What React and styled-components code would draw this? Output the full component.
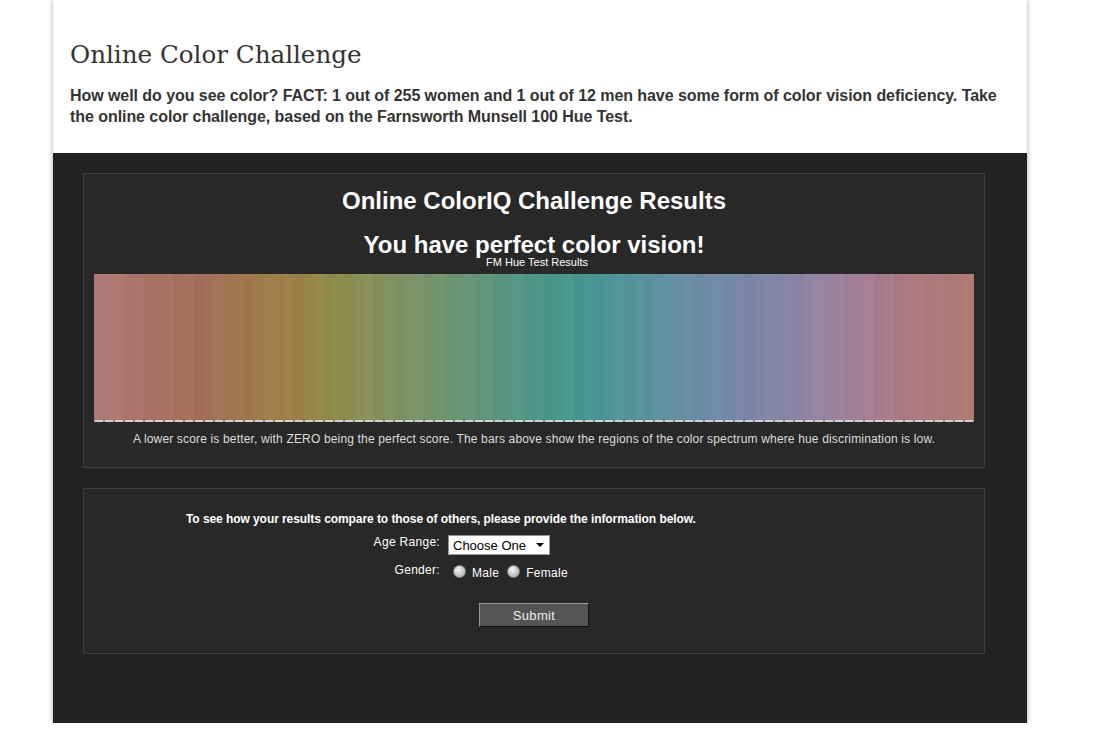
import styled, { createGlobalStyle } from "styled-components"

const GlobalStyle = createGlobalStyle`
  html, body {
    margin: 0;
    padding: 0;
    background: #fff;
  }
  body {
    font-family: "Liberation Sans", Arial, sans-serif;
  }
`

// key colours sampled along the hue strip, left to right
const stops = [
  [0, "#b07a78"], [0.06, "#a87264"], [0.12, "#a26f5a"], [0.17, "#a0774c"],
  [0.21, "#9f8049"], [0.25, "#958646"], [0.27, "#8d8c4a"], [0.3, "#8a8f58"],
  [0.35, "#7d9066"], [0.4, "#6e9570"], [0.45, "#5e957c"], [0.5, "#4d9686"],
  [0.55, "#45978e"], [0.6, "#52939a"], [0.66, "#6490a2"], [0.72, "#7488a6"],
  [0.78, "#8484a4"], [0.84, "#9884a0"], [0.88, "#a67e96"], [0.93, "#ac7882"],
  [1, "#ae7a74"],
]

const hex = (h) => [1, 3, 5].map((i) => parseInt(h.slice(i, i + 2), 16))

const colourAt = (t, jitter) => {
  let i = 0
  while (i < stops.length - 2 && stops[i + 1][0] < t) i++
  const [t0, c0] = stops[i]
  const [t1, c1] = stops[i + 1]
  const k = (t - t0) / (t1 - t0)
  const a = hex(c0)
  const b = hex(c1)
  const rgb = a.map((v, j) => Math.round(v + (b[j] - v) * k + jitter))
  return `rgb(${rgb.join(",")})`
}

const BAND_COUNT = 88
const bands = Array.from({ length: BAND_COUNT }, (_, i) =>
  colourAt(i / (BAND_COUNT - 1), ((i * 7) % 5) - 2)
)

const Page = styled.div`
  width: 974px;
  margin-left: 53px;
  box-shadow: 0 0 5px rgba(0, 0, 0, 0.35);
`

const Header = styled.header`
  background: #fff;
  height: 153px;
  box-sizing: border-box;
  padding: 39px 20px 0 17px;
  color: #333;
`

const Title = styled.h1`
  margin: 0 0 14px;
  font-family: "DejaVu Serif", Georgia, serif;
  font-weight: normal;
  font-size: 24.6px;
  line-height: 32px;
  color: #333;
`

const Intro = styled.p`
  margin: 0;
  font-weight: bold;
  font-size: 16px;
  line-height: 21px;
  letter-spacing: -0.06px;
  color: #333;
`

const Dark = styled.section`
  background: #222;
  height: 570px;
  box-sizing: border-box;
  padding: 20px 42px 0 30px;
  display: flex;
  flex-direction: column;
  gap: 20px;
`

const Panel = styled.div`
  background: #282828;
  border: 1px solid #3d3d3d;
  padding: ${(p) => p.$pad};
`

const ResultTitle = styled.h2`
  margin: ${(p) => p.$top || "0"} 0 0;
  text-align: center;
  color: #fff;
  font-weight: bold;
  font-size: 24px;
  line-height: 28px;
`

const ChartLabel = styled.div`
  text-align: center;
  color: #fff;
  font-size: 11px;
  line-height: 13px;
  margin: -3px 0 5px;
  padding-left: 6px;
`

const Strip = styled.div`
  display: flex;
  height: 148px;
  position: relative;
`

const Band = styled.div`
  flex: 1;
`

const Baseline = styled.div`
  position: absolute;
  left: 0;
  right: 0;
  bottom: 0;
  height: 2px;
  background: repeating-linear-gradient(
    to right,
    transparent 0,
    transparent 1px,
    #d0d0d0 1px,
    #d0d0d0 9px,
    transparent 9px,
    transparent 10px
  );
`

const Caption = styled.p`
  margin: 10px 0 0;
  text-align: center;
  color: #ddd;
  font-size: 12px;
  line-height: 14px;
  letter-spacing: 0.16px;
`

const Form = styled.div`
  display: grid;
  grid-template-columns: 254px auto;
  column-gap: 8px;
  padding-left: 102px;
  color: #fff;
  font-size: 12px;
`

const FormHead = styled.div`
  grid-column: 1 / span 2;
  font-weight: bold;
  line-height: 14px;
  letter-spacing: -0.07px;
  margin-bottom: 4px;
`

const Label = styled.div`
  text-align: right;
  line-height: 14px;
  letter-spacing: 0.3px;
  margin-top: ${(p) => p.$top};
`

const Field = styled.div`
  display: flex;
  align-items: center;
  margin-top: ${(p) => p.$top};
  height: ${(p) => p.$h};
`

const Select = styled.div`
  width: 102px;
  height: 20px;
  box-sizing: border-box;
  background: #fff;
  border: 1px solid #999;
  color: #000;
  font-size: 13px;
  display: flex;
  align-items: center;
  justify-content: space-between;
  padding: 0 5px 0 4px;
`

const Caret = styled.span`
  width: 0;
  height: 0;
  border-left: 4px solid transparent;
  border-right: 4px solid transparent;
  border-top: 4px solid #000;
`

const Radio = styled.span`
  width: 11px;
  height: 11px;
  border-radius: 50%;
  border: 1px solid #888;
  background: radial-gradient(circle at 40% 35%, #f4f4f4, #b8b8b8 70%, #9a9a9a);
  margin: 0 6px 0 ${(p) => p.$left};
`

const RadioText = styled.span`
  color: #fff;
  font-size: 12px;
  letter-spacing: 0.3px;
  padding-top: 3px;
`

const SubmitRow = styled.div`
  display: flex;
  justify-content: center;
  margin-top: 22px;
`

const Submit = styled.button`
  width: 110px;
  height: 24px;
  background: #555;
  color: #eee;
  font-family: "Liberation Sans", Arial, sans-serif;
  font-size: 13px;
  letter-spacing: 0.3px;
  border: 1px solid;
  border-color: #999 #111 #111 #999;
  padding: 0;
`

const App = () => {
  return (
    <>
      <GlobalStyle />
      <Page>
        <Header>
          <Title>Online Color Challenge</Title>
          <Intro>
            How well do you see color? FACT: 1 out of 255 women and 1 out of 12 men have some
            form of color vision deficiency. Take the online color challenge, based on the
            Farnsworth Munsell 100 Hue Test.
          </Intro>
        </Header>
        <Dark>
          <Panel $pad="13px 10px 21px">
            <ResultTitle>Online ColorIQ Challenge Results</ResultTitle>
            <ResultTitle $top="16px">You have perfect color vision!</ResultTitle>
            <ChartLabel>FM Hue Test Results</ChartLabel>
            <Strip>
              {bands.map((c, i) => (
                <Band key={i} style={{ background: c }} />
              ))}
              <Baseline />
            </Strip>
            <Caption>
              A lower score is better, with ZERO being the perfect score. The bars above show
              the regions of the color spectrum where hue discrimination is low.
            </Caption>
          </Panel>
          <Panel $pad="23px 0 26px">
            <Form>
              <FormHead>
                To see how your results compare to those of others, please provide the
                information below.
              </FormHead>
              <Label $top="5px">Age Range:</Label>
              <Field $top="5px" $h="20px">
                <Select>
                  Choose One <Caret />
                </Select>
              </Field>
              <Label $top="8px">Gender:</Label>
              <Field $top="6px" $h="20px">
                <Radio $left="5px" />
                <RadioText>Male</RadioText>
                <Radio $left="8px" />
                <RadioText>Female</RadioText>
              </Field>
            </Form>
            <SubmitRow>
              <Submit>Submit</Submit>
            </SubmitRow>
          </Panel>
        </Dark>
      </Page>
    </>
  )
}

export default App
